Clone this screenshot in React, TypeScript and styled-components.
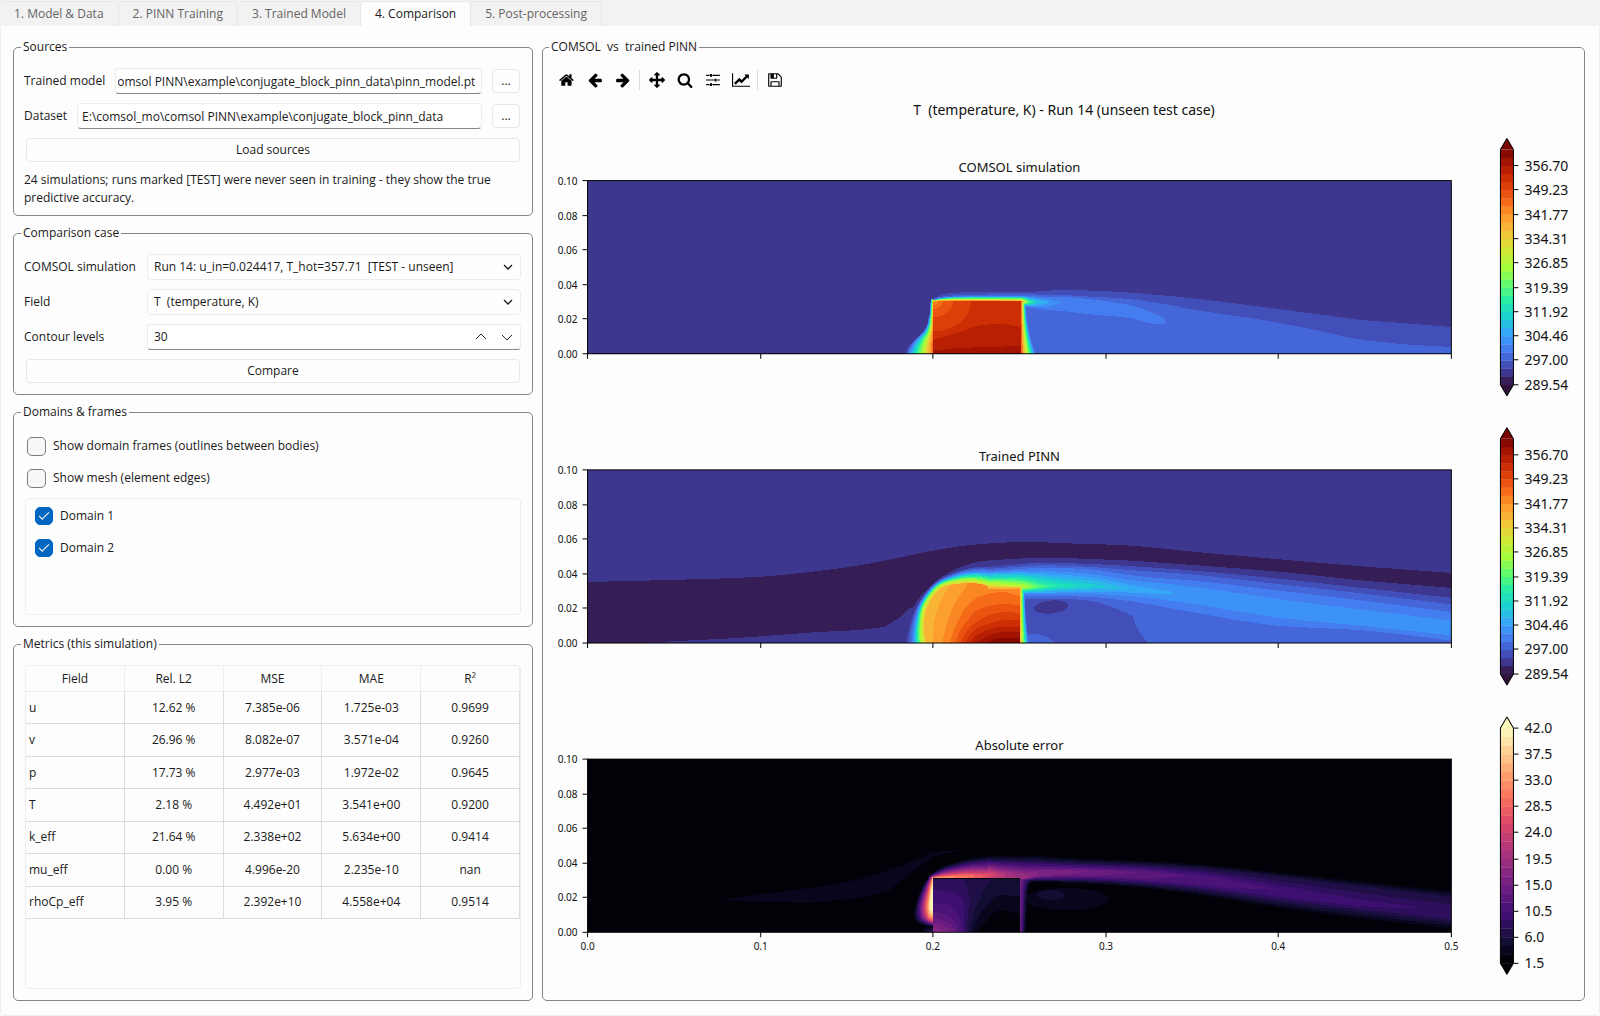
import React, { useEffect, useMemo, useRef, useState } from "react";
import styled, { createGlobalStyle } from "styled-components";

const GlobalStyle = createGlobalStyle`
  *, *::before, *::after { box-sizing: border-box; }
  body { margin: 0; background: #fdfdfd; }
  body, button, input, select, table {
    font-family: "Open Sans", "Noto Sans", "Segoe UI", sans-serif;
    font-size: 12px;
    line-height: 18px;
    color: #1a1a1a;
  }
`;

/* ---------- shell ---------- */

const Page = styled.div`
  min-height: 100vh;
  display: flex;
  flex-direction: column;
`;

const TabBar = styled.div`
  display: flex;
  height: 26px;
  padding-top: 1px;
  background: #f2f2f2;
`;

const Tab = styled.button<{ $active?: boolean }>`
  padding: 0 14px 1px;
  border: 1px solid #e7e7e7;
  border-width: 1px 1px 0 0;
  border-radius: 4px 4px 0 0;
  background: ${(p) => (p.$active ? "#fdfdfd" : "#f2f2f2")};
  color: ${(p) => (p.$active ? "#1a1a1a" : "#646464")};
  white-space: nowrap;
`;

const Content = styled.main`
  flex: 1;
  display: grid;
  grid-template-columns: 520px minmax(0, 1fr);
  gap: 9px;
  padding: 13px 14px 14px 12px;
  border: 1px solid #efefef;
  border-top: 0;
  border-radius: 0 0 4px 4px;
`;

const Side = styled.div`
  display: flex;
  flex-direction: column;
  gap: 9px;
`;

const Group = styled.fieldset<{ $grow?: boolean; $bottom?: number }>`
  display: flex;
  flex-direction: column;
  flex: ${(p) => (p.$grow ? "1" : "none")};
  min-width: 0;
  margin: 0;
  padding: 13px 11px ${(p) => p.$bottom ?? 11}px 10px;
  border: 1px solid #858585;
  border-radius: 5px;
`;

const Legend = styled.legend`
  margin-left: -3px;
  padding: 0 2px;
  line-height: 16px;
  white-space: pre;
`;

const Stack = styled.div<{ $gap: number }>`
  display: flex;
  flex-direction: column;
  flex: 1;
  gap: ${(p) => p.$gap}px;
`;

const Row = styled.div`
  display: flex;
  align-items: center;
  gap: 10px;
`;

const FormGrid = styled.div`
  display: grid;
  grid-template-columns: 114px 1fr;
  gap: 9px;
  align-items: center;
`;

/* ---------- controls ---------- */

const PathInput = styled.input<{ $scrolled?: boolean }>`
  flex: 1;
  min-width: 0;
  height: 26px;
  padding: 0 6px 0 ${(p) => (p.$scrolled ? 2 : 4)}px;
  border: 1px solid #ececec;
  border-bottom-color: #868686;
  border-radius: 4px;
  background: #fff;
`;

const Button = styled.button<{ $small?: boolean }>`
  height: 24px;
  width: ${(p) => (p.$small ? "28px" : "auto")};
  margin: 0 1px 0 ${(p) => (p.$small ? 0 : 2)}px;
  padding: 0;
  border: 1px solid #e8e8e8;
  border-radius: 4px;
  background: #fefefe;
`;

const Note = styled.p`
  margin: 0;
`;

const Field = styled.div`
  position: relative;
  display: flex;
`;

const Select = styled.select`
  flex: 1;
  min-width: 0;
  height: 26px;
  padding: 0 30px 0 6px;
  border: 1px solid #ececec;
  border-radius: 4px;
  background: #fefefe;
  appearance: none;
  white-space: pre;
`;

const SelectArrow = styled.span`
  position: absolute;
  right: 8px;
  top: 0;
  bottom: 0;
  display: flex;
  align-items: center;
  pointer-events: none;
`;

const Spin = styled.div`
  display: flex;
  align-items: center;
  height: 26px;
  border: 1px solid #ececec;
  border-bottom-color: #868686;
  border-radius: 4px;
  background: #fff;
`;

const SpinInput = styled.input`
  flex: 1;
  min-width: 0;
  padding: 0 6px;
  border: 0;
  background: none;
  appearance: textfield;
  &::-webkit-inner-spin-button { appearance: none; margin: 0; }
`;

const SpinButton = styled.button`
  display: grid;
  place-items: center;
  width: 26px;
  height: 24px;
  padding: 0;
  border: 0;
  background: none;
`;

const CheckRow = styled.label`
  display: flex;
  align-items: center;
  gap: 7px;
  height: 26px;
`;

const Check = styled.input`
  appearance: none;
  display: grid;
  place-items: center;
  width: 19px;
  height: 19px;
  margin: 0;
  border: 1px solid #7c7c7c;
  border-radius: 5px;
  background: #f7f7f7;
  &:checked {
    width: 18px;
    height: 18px;
    border-color: #0067c0;
    background: #0067c0;
  }
  &:checked::after {
    content: "";
    width: 10px;
    height: 5px;
    margin-bottom: 4px;
    border: solid #fff;
    border-width: 0 0 1px 1px;
    transform: rotate(-45deg);
  }
`;

const FrameChecks = styled.div`
  display: flex;
  flex-direction: column;
  gap: 6px;
  padding-left: 3px;
`;

const DomainList = styled.div`
  display: flex;
  flex-direction: column;
  gap: 6px;
  height: 117px;
  padding: 4px 9px;
  margin-left: 1px;
  border: 1px solid #eeeeee;
  border-radius: 4px;
`;

/* ---------- metrics ---------- */

const TableFrame = styled.div`
  flex: 1;
  margin-left: 1px;
  border: 1px solid #eeeeee;
  border-radius: 4px;
`;

const Table = styled.table`
  width: 100%;
  height: 253px;
  table-layout: fixed;
  border-collapse: separate;
  border-spacing: 0;
  th { height: 26px; padding: 0; font-weight: 400; border-right: 1px solid #eeeeee; border-bottom: 1px solid #eeeeee; }
  td { padding: 0 3px; text-align: center; border-right: 1px solid #dcdcdc; border-bottom: 1px solid #dcdcdc; }
  td:first-child { text-align: left; }
`;

/* ---------- figure ---------- */

const FigureGroup = styled(Group)`
  padding: 8px 0 4px;
`;

const FigureLegend = styled(Legend)`
  margin-left: 6px;
`;

const Toolbar = styled.div`
  display: flex;
  align-items: center;
  height: 34px;
  padding-left: 10px;
`;

const Tool = styled.button`
  display: grid;
  place-items: center;
  width: 28px;
  height: 28px;
  padding: 0;
  border: 0;
  background: none;
`;

const Separator = styled.span`
  width: 1px;
  height: 20px;
  margin: 0 3px 0 2px;
  background: #dadada;
`;

const Figure = styled.svg`
  display: block;
  width: 100%;
  height: auto;
  text { fill: #111; white-space: pre; font-family: "Noto Sans", "Open Sans", sans-serif; }
  .tick { font-size: 10px; }
  .title { font-size: 13px; }
  .heading { font-size: 14px; }
  .bar { font-size: 14px; }
`;

/* ---------- colour maps ---------- */

type Stop = [number, string];

const even = (list: string): Stop[] => {
  const c = list.split(" ");
  return c.map((v, i) => [i / (c.length - 1), v] as Stop);
};

const TURBO: Stop[] = [
  [0, "30123b"], [0.017, "351e55"], [0.052, "3e378f"],
  ...even("30123b 4145ab 4675ed 39a2fc 1bcfd4 24eca6 61fc6c a4fc3b d1e834 f3c63a fe9b2d f36315 d93806 b11901 7a0402").slice(1),
];
const MAGMA: Stop[] = [
  [0, "000004"], [0.02, "010107"], [0.056, "07061c"],
  ...even("000004 140e36 3b0f70 641a80 8c2981 b73779 de4968 f7705c fe9f6d fecf92 fcfdbf").slice(1),
];

const sample = (stops: Stop[], t: number) => {
  let i = 0;
  while (i < stops.length - 2 && t > stops[i + 1][0]) i++;
  const [t0, a] = stops[i];
  const [t1, b] = stops[i + 1];
  const f = Math.max(0, Math.min(1, (t - t0) / (t1 - t0)));
  const ch = [0, 2, 4].map((o) => {
    const p = parseInt(a.slice(o, o + 2), 16);
    const q = parseInt(b.slice(o, o + 2), 16);
    return Math.round(p + (q - p) * f);
  });
  return `rgb(${ch.join(",")})`;
};

/* ---------- fields, in band numbers over an 863 x 173 plot ---------- */

const W = 863;
const H = 173;

const clamp = (v: number, a: number, b: number) => Math.max(a, Math.min(b, v));

/** Piecewise linear curve through [x, y] pairs. */
const lin = (pts: number[][], x: number) => {
  if (x <= pts[0][0]) return pts[0][1];
  for (let i = 1; i < pts.length; i++) {
    if (x <= pts[i][0]) {
      const [a, b] = [pts[i - 1], pts[i]];
      return b[0] === a[0] ? b[1] : a[1] + ((b[1] - a[1]) * (x - a[0])) / (b[0] - a[0]);
    }
  }
  return pts[pts.length - 1][1];
};

/** Smooth interpolation of whole rows keyed by their first entry. */
const blend = (rows: number[][], x: number): number[] => {
  const n = rows.length;
  if (x <= rows[0][0]) return rows[0].slice(1);
  if (x >= rows[n - 1][0]) return rows[n - 1].slice(1);
  let i = 0;
  while (x > rows[i + 1][0]) i++;
  const p0 = rows[Math.max(0, i - 1)];
  const p1 = rows[i];
  const p2 = rows[i + 1];
  const p3 = rows[Math.min(n - 1, i + 2)];
  const h = p2[0] - p1[0];
  const t = (x - p1[0]) / h;
  return p1.slice(1).map((_, j) => {
    const k = j + 1;
    const s = (p2[k] - p1[k]) / h;
    const sa = i > 0 ? (p1[k] - p0[k]) / (p1[0] - p0[0]) : s;
    const sb = i + 2 < n ? (p3[k] - p2[k]) / (p3[0] - p2[0]) : s;
    const m1 = sa * s > 0 ? (2 * sa * s) / (sa + s) : 0;
    const m2 = sb * s > 0 ? (2 * sb * s) / (sb + s) : 0;
    const t2 = t * t;
    const t3 = t2 * t;
    return (2 * t3 - 3 * t2 + 1) * p1[k] + (t3 - 2 * t2 + t) * h * m1 + (3 * t2 - 2 * t3) * p2[k] + (t3 - t2) * h * m2;
  });
};

type FieldFn = (x: number) => (y: number) => number;

// x, edge of band 2, band 3, band 4, jet axis, jet value, lower edge
const SIM_WAKE = [
  [345, 118, 118.4, 119, 120, 22, 124],
  [352, 114, 116, 117, 120, 22, 124],
  [365, 112, 114.5, 115.5, 120, 22, 124],
  [399, 110.5, 113.5, 115, 120, 22, 124],
  [433, 111, 113, 115, 120.5, 22, 124],
  [440, 111, 113, 115, 121, 13, 126],
  [450, 110.5, 113.5, 115.5, 121, 8, 128],
  [474, 109, 114, 116, 121.5, 5, 130],
  [500, 109.5, 115.5, 118, 125, 4.7, 133],
  [541, 111.5, 118, 124, 130, 4.4, 137],
  [570, 114, 122, 134, 139, 4.15, 143],
  [582, 115, 124, 140, 141, 3.9, 143],
  [602, 117, 128, 142, 143, 3.6, 145],
  [675, 126, 139, 150, 152, 3.5, 155],
  [732, 133.5, 150, 160, 162, 3.5, 165],
  [770, 138.5, 158, 166, 167, 3.5, 169],
  [820, 142.5, 163.5, 170, 171, 3.5, 172],
  [864, 146, 166, 171, 172, 3.5, 173],
];

const simulation: FieldFn = (x) => {
  const [yo, y3, y4, yp, kp, yb] = blend(SIM_WAKE, x);
  const k4 = Math.min(4, kp);
  return (y) => {
    if (x < 345) {
      const xl = lin([[116, 344], [120, 342.5], [133, 341.5], [144, 339], [151, 335], [159, 326], [165, 321], [173, 317]], y);
      if (y < 118) return 1.5;
      return x < xl ? 1.5 : 2 + (21 * (x - xl)) / (345.5 - xl);
    }
    if (x <= 433 && y >= 120) {
      const edge = Math.min(x - 344, 434 - x, y - 119);
      if (edge < 1.5) return 21.5;
      const d = Math.hypot(x - 345, (y - 120) * 1.25);
      const y27 = lin([[346, 169.5], [369, 167], [399, 166], [433, 165]], x);
      const y26 = blend([[346, 158.5], [369, 152], [392, 144.5], [411, 143], [433, 146]], x)[0];
      if (y > y27) return 27.3;
      if (y > y26) return 26.5;
      return lin([[0, 20.5], [5, 22], [10, 23], [20, 24], [38, 25], [40, 25.5]], d);
    }
    let k = lin([[0, 1.2], [yo, 2], [y3, 3], [y4, k4], [yp, kp], [yb, k4], [yb + 3, 3.5], [240, 3.4]], y);
    if (x > 433 && y >= 120) {
      const w = 5 + 10 * Math.pow(clamp((y - 122) / 51, 0, 1), 2);
      k = Math.max(k, 3.5 + 20 * (1 - (x - 433) / w));
    }
    return k;
  };
};

// angle, then radii of bands 1, 2, 3.5, 5, 10, 15, 18 around (400, 173)
const PINN_CAP = [
  [0, 87, 81, 77.5, 74.5, 70.5, 66.5, 62],
  [15, 84.5, 80, 77.5, 75.5, 72.5, 69.5, 66],
  [31, 82.5, 80, 79, 78, 76, 74, 71],
  [47, 81, 80, 79.3, 78.6, 76.9, 75, 72.5],
  [65, 80.5, 78, 76.5, 75, 72, 69, 65.5],
  [90, 82.5, 76, 73.5, 70.5, 65.5, 60, 57],
];

// x, dark band top and bottom, edges of bands 2..5, axis, value, lower edges of 5 and 4, floor row, floor value, base value
const PINN_WAKE = [
  [400, 73.5, 90.5, 97, 99, 101, 102.5, 116, 18, 124, 126, 130, 2.5, 2.5],
  [433, 72, 88.5, 94, 96.5, 99, 101, 117, 16, 124, 126, 131, 2.5, 3.2],
  [450, 72, 88, 93, 95.5, 98, 101, 117, 12.5, 123.5, 126, 131, 2.4, 3.3],
  [468, 73, 88, 93, 95.5, 98, 101.5, 116, 10.3, 124, 126, 130, 2.4, 3],
  [503, 74, 89, 94, 97, 99.5, 104, 116, 8.6, 124, 127, 133, 2.5, 2.6],
  [541, 75.5, 90.5, 96, 100, 105, 110, 119, 7, 126, 131, 145, 2.95, 2.8],
  [570, 78, 92.5, 98, 102, 108, 113, 122, 6.4, 129, 136, 150, 3.4, 3.1],
  [598, 81, 94.5, 100, 104, 110, 116, 124, 5.9, 133, 141, 150, 3.5, 3.3],
  [694, 89.5, 102, 109, 114.5, 121, 129.5, 139, 5.8, 148, 156, 165, 3.5, 3.2],
  [770, 96, 110, 117.5, 123, 130, 139, 148, 5.8, 155.5, 160, 170, 3.4, 3.3],
  [864, 103, 118, 128, 134.5, 142, 150.5, 158, 5.8, 165.5, 170.5, 172.5, 3.6, 3.6],
];

const PINN_BLOCK = [
  [335, 18.6, 19, 19.2, 19.3],
  [346, 19.2, 19.6, 20, 20.1],
  [362, 20, 20.6, 21.2, 22],
  [375, 20.8, 21.4, 22.6, 24.6],
  [390, 21.4, 22.2, 24.1, 27.3],
  [416, 21.6, 22.6, 25.2, 28.9],
  [433, 21, 22.5, 25.2, 28.9],
];

const pinn: FieldFn = (x) => {
  const p = blend(PINN_WAKE, x);
  const b = blend(PINN_BLOCK, x);
  const yd = blend([[0, 112], [80, 110], [168, 107], [230, 101], [273, 95], [307, 88.5], [346, 80.5], [388, 74.5], [437, 72]], x)[0];
  const yb = lin([[0, 174], [50, 173], [150, 168], [230, 162], [273, 160], [296, 157], [311, 148], [322, 138]], x);
  const inside = (y: number) => lin([[116, b[0]], [131, b[1]], [152, b[2]], [173, b[3]]], y);
  const floorY = Math.min(172.9, Math.max(160, p[10] + 0.1));
  return (y) => {
    if (x < 400) {
      const r = Math.hypot(400 - x, H - y);
      const c = blend(PINN_CAP, (Math.atan2(H - y, 400 - x) * 180) / Math.PI);
      if (r > c[0]) return y < yd ? 1.5 : y > yb ? 1.4 : 0.5;
      if (r < c[6]) return inside(y);
      return lin([[c[6], 18], [c[5], 15], [c[4], 10], [c[3], 5], [c[2], 3.5], [c[1], 2], [c[0], 1]], r);
    }
    if (x <= 432 && y > 117) return y < 119 ? 19 : inside(y);
    if (Math.pow((x - 463) / 17, 2) + Math.pow((y - 137 + (x - 463) / 12) / 6.5, 2) < 1) return 1.5;
    let k = lin(
      [[0, 1.8], [p[0], 1], [(p[0] + p[1]) / 2, 0.5], [p[1], 1], [p[2], 2], [p[3], 3], [p[4], 4], [p[5], 5], [p[6], p[7]], [p[8], 5], [p[9], 4], [p[10], p[11]], [floorY, (p[11] + p[12]) / 2], [173, p[12]]],
      y,
    );
    if (x > 432 && y >= 117) {
      const w = 5 + 4 * Math.pow(clamp((y - 122) / 51, 0, 1), 2);
      k = Math.max(k, 3 + 17 * (1 - (x - 432) / w));
    }
    return k;
  };
};

// angle, outer radius of the glow around (400, 173), peak value at the block wall
const ERROR_CAP = [
  [0, 70, 5],
  [5, 72, 1.5],
  [8, 76, 7],
  [12, 77, 17],
  [17, 78, 23],
  [24, 79, 26.8],
  [36, 80.5, 26.5],
  [44, 81.5, 23],
  [52, 81, 20.5],
  [65, 78, 19.5],
  [80, 77, 17.5],
  [90, 77.5, 16.5],
];

// x, edge, edge of band 3, ridge, ridge value, shoulder, shoulder value, lower edge
const ERROR_PLUME = [
  [400, 95.5, 100, 115, 16.5, 119.5, 15.5, 122],
  [415, 95, 101, 115, 13.5, 119.5, 13, 122],
  [433, 95, 101, 114, 11, 119.5, 12, 123],
  [450, 95, 101.5, 113, 10, 117, 10, 123],
  [478, 97, 103, 112, 9.5, 116, 9, 124],
  [541, 100, 105, 113, 8.2, 119, 7.2, 128],
  [600, 103, 108, 117, 7, 124, 6.4, 135],
  [694, 112, 118, 131, 6, 137, 5.5, 150],
  [770, 120, 127, 142, 5.3, 147, 5, 160],
  [864, 130, 138, 152, 4.9, 158, 4.7, 171],
];

const ERROR_BLOCK = [
  [345, 4.5, 5.5, 7.5, 11],
  [360, 4.2, 5.5, 7, 9.5],
  [374, 4, 5, 5.5, 6],
  [382, 3.6, 4, 3.5, 2.8],
  [395, 3.3, 2.8, 1.5, 0.6],
  [412, 2.9, 1.8, 0.6, 0.3],
  [432, 2.7, 1.9, 0.9, 0.4],
];

const error: FieldFn = (x) => {
  const p = blend(ERROR_PLUME, x);
  const b = blend(ERROR_BLOCK, x);
  return (y) => {
    if (x >= 345 && x <= 432 && y >= 119.5) {
      if (y < 120.5) return 0.5;
      return lin([[120, b[0]], [140, b[1]], [157, b[2]], [173, b[3]]], y);
    }
    if (x < 400) {
      const angle = Math.atan2(H - y, 400 - x);
      const r = Math.hypot(400 - x, H - y);
      const [outer, peak] = blend(ERROR_CAP, (angle * 180) / Math.PI);
      const wall = Math.min(55 / Math.cos(angle), 53.5 / Math.sin(angle));
      if (r < outer) return peak * Math.min(1, Math.pow((outer - r) / Math.max(3, (outer - wall) * 0.85), 1.2));
      const up = lin([[130, 141], [230, 128], [273, 120], [310, 108], [345, 93], [372, 91]], x);
      const low = lin([[130, 141], [220, 144], [273, 139], [300, 132], [325, 112], [345, 98], [372, 91]], x);
      return y > up && y < low ? 1.3 : 0;
    }
    let k = lin([[p[0], 0], [p[1], 3], [p[2], p[3]], [p[4], p[5]], [p[6], 0.6], [p[6] + 3, 0]], y);
    if (x > 432 && y >= 119.5) {
      const w = lin([[120, 16], [126, 10], [140, 8], [173, 6]], y);
      k = Math.max(k, lin([[120, 10], [130, 9.5], [173, 9]], y) * (1 - (x - 432) / w));
      if (Math.pow((x - 478) / 42, 2) + Math.pow((y - 140) / 11, 2) < 1) k = Math.max(k, 1.2);
      if (Math.pow((x - 463) / 14, 2) + Math.pow((y - 136) / 5, 2) < 1) k = Math.max(k, 2.2);
    }
    return k;
  };
};

/** Turns a field into one path per colour band, made of horizontal runs. */
const bandPaths = (field: FieldFn, bands: number) => {
  const columns = Array.from({ length: W }, (_, x) => field(x + 0.5));
  const d: string[] = Array(bands).fill("");
  for (let y = 0; y < H; y++) {
    let start = 0;
    let current = -1;
    for (let x = 0; x <= W; x++) {
      const k = x < W ? clamp(Math.floor(columns[x](y + 0.5)), 0, bands - 1) : -2;
      if (k !== current) {
        if (current >= 0) d[current] += `M${start} ${y}h${x - start}v1h${start - x}z`;
        start = x;
        current = k;
      }
    }
  }
  return d;
};

interface PlotProps {
  title: string;
  top: number;
  field: FieldFn;
  bands: number;
  map: Stop[];
  labels: string[];
  firstTick: number;
  tickStep: number;
  over: string;
  under: string;
  xLabels?: boolean;
}

const Plot = ({ title, top, field, bands, map, labels, firstTick, tickStep, over, under, xLabels }: PlotProps) => {
  const paths = useMemo(() => bandPaths(field, bands), [field, bands]);
  const bandHeight = 235 / bands;
  return (
    <g transform={`translate(44 ${top})`}>
      <text className="title" x={W / 2} y={-9} textAnchor="middle">{title}</text>
      <g shapeRendering="crispEdges">
        {paths.map((d, i) => d && <path key={i} d={d} fill={sample(map, (i + 0.5) / bands)} />)}
      </g>
      <rect width={W} height={H} fill="none" stroke="#000" />
      {[0, 1, 2, 3, 4, 5].map((i) => {
        const y = Math.round((H * (5 - i)) / 5);
        return (
          <g key={i}>
            <path d={`M-5 ${y}h5`} stroke="#000" />
            <text className="tick" x={-10} y={y + 4} textAnchor="end">{(i * 0.02).toFixed(2)}</text>
          </g>
        );
      })}
      {[0, 1, 2, 3, 4, 5].map((i) => {
        const x = Math.round((W * i) / 5);
        return (
          <g key={i}>
            <path d={`M${x} ${H}v5`} stroke="#000" />
            {xLabels && <text className="tick" x={x} y={H + 18} textAnchor="middle">{(i / 10).toFixed(1)}</text>}
          </g>
        );
      })}
      <g transform="translate(912 -31)">
        <path d="M0 0L6.500 -11L13 0z" fill={over} />
        <path d="M0 235L6.500 246L13 235z" fill={under} />
        {Array.from({ length: bands }, (_, i) => (
          <rect key={i} y={235 - (i + 1) * bandHeight} width={13} height={bandHeight + 0.3} fill={sample(map, (i + 0.5) / bands)} />
        ))}
        <path d="M0 0L6.500 -11L13 0V235L6.500 246L0 235z" fill="none" stroke="#000" strokeLinejoin="round" />
        {labels.map((label, i) => {
          const y = Math.round(firstTick + i * tickStep);
          return (
            <g key={label}>
              <path d={`M13 ${y}h5`} stroke="#000" />
              <text className="bar" x={24} y={y + 5}>{label}</text>
            </g>
          );
        })}
      </g>
    </g>
  );
};

const T_LABELS = ["356.70", "349.23", "341.77", "334.31", "326.85", "319.39", "311.92", "304.46", "297.00", "289.54"];
const E_LABELS = ["42.0", "37.5", "33.0", "28.5", "24.0", "19.5", "15.0", "10.5", "6.0", "1.5"];

/* ---------- icons ---------- */

const ICONS = {
  home: "M1408 992v480q0 26-19 45t-45 19h-384v-384h-256v384h-384q-26 0-45-19t-19-45v-480q0-1 .5-3t.5-3l575-474 575 474q1 2 1 6zm223-69l-62 74q-8 9-21 11h-3q-13 0-21-7l-692-577-692 577q-12 8-24 7-13-2-21-11l-62-74q-8-10-7-23.5t11-21.5l719-599q32-26 76-26t76 26l244 204v-195q0-14 9-23t23-9h192q14 0 23 9t9 23v408l219 182q10 8 11 21.5t-7 23.5z",
  back: "M1664 896v128q0 53-32.5 90.5t-84.5 37.5h-704l293 294q38 36 38 90t-38 90l-75 76q-37 37-90 37-52 0-91-37l-651-652q-37-37-37-90 0-52 37-91l651-650q38-38 91-38 52 0 90 38l75 74q38 38 38 91t-38 91l-293 293h704q52 0 84.5 37.5t32.5 90.5z",
  forward: "M1600 960q0 54-37 91l-651 651q-39 37-91 37-51 0-90-37l-75-75q-38-38-38-91t38-91l293-293h-704q-52 0-84.5-37.5t-32.5-90.5v-128q0-53 32.5-90.5t84.5-37.5h704l-293-294q-38-36-38-90t38-90l75-75q38-38 90-38 53 0 91 38l651 651q37 35 37 90z",
  move: "M1792 896q0 26-19 45l-256 256q-19 19-45 19t-45-19-19-45v-128h-384v384h128q26 0 45 19t19 45-19 45l-256 256q-19 19-45 19t-45-19l-256-256q-19-19-19-45t19-45 45-19h128v-384h-384v128q0 26-19 45t-45 19-45-19l-256-256q-19-19-19-45t19-45l256-256q19-19 45-19t45 19 19 45v128h384v-384h-128q-26 0-45-19t-19-45 19-45l256-256q19-19 45-19t45 19l256 256q19 19 19 45t-19 45-45 19h-128v384h384v-128q0-26 19-45t45-19 45 19l256 256q19 19 19 45z",
  zoom: "M1216 832q0-185-131.5-316.5t-316.5-131.5-316.5 131.5-131.5 316.5 131.5 316.5 316.5 131.5 316.5-131.5 131.5-316.5zm512 832q0 52-38 90t-90 38q-54 0-90-38l-343-342q-179 124-399 124-143 0-273.5-55.5t-225-150-150-225-55.5-273.5 55.5-273.5 150-225 225-150 273.5-55.5 273.5 55.5 225 150 150 225 55.5 273.5q0 220-124 399l343 343q37 37 37 90z",
  sliders: "M128 320h384v128H128zM832 320h832v128H832zM560 230h224v308H560zM128 832h896v128H128zM1344 832h320v128h-320zM1072 742h224v308h-224zM128 1344h384v128H128zM832 1344h832v128H832zM560 1254h224v308H560z",
  chart: "M2048 1536v128h-2048v-1536h128v1408h1920zm-128-1248v435q0 21-19.500 29.500t-35.500-7.500l-121-121-633 633q-10 10-23 10t-23-10l-233-233-416 416-192-192 585-585q10-10 23-10t23 10l233 233 464-464-121-121q-16-16-7.500-35.500t29.500-19.500h435q14 0 23 9t9 23z",
  save: "M512 1536h768v-384h-768v384zm896 0h128v-896q0-14-10-38.5t-20-34.5l-281-281q-10-10-34-20t-39-10v416q0 40-28 68t-68 28h-576q-40 0-68-28t-28-68v-416h-128v1280h128v-416q0-40 28-68t68-28h832q40 0 68 28t28 68v416zm-384-928v-320q0-13-9.500-22.500t-22.500-9.500h-192q-13 0-22.500 9.500t-9.500 22.500v320q0 13 9.500 22.500t22.500 9.500h192q13 0 22.500-9.500t9.500-22.500zm640 32v928q0 40-28 68t-68 28h-1344q-40 0-68-28t-28-68v-1344q0-40 28-68t68-28h928q40 0 88 20t76 48l280 280q28 28 48 76t20 88z",
};

const ToolButton = ({ name, label }: { name: keyof typeof ICONS; label: string }) => {
  const w = name === "chart" ? 2048 : 1792;
  return (
    <Tool type="button" aria-label={label}>
      <svg width={name === "chart" ? 18 : 16} height={16} viewBox={`0 0 ${w} 1792`} aria-hidden="true">
        <path d={ICONS[name]} />
      </svg>
    </Tool>
  );
};

const Chevron = ({ up }: { up?: boolean }) => (
  <svg width="12" height="10" viewBox="0 0 12 10" fill="none" stroke="#222" aria-hidden="true">
    <path d={up ? "M1 7L6 2L11 7" : "M1 3L6 8L11 3"} />
  </svg>
);

const SelectChevron = () => (
  <SelectArrow>
    <svg width="10" height="8" viewBox="0 0 10 8" fill="none" stroke="#1a1a1a" strokeWidth="1.300" aria-hidden="true">
      <path d="M1 2L5 6L9 2" />
    </svg>
  </SelectArrow>
);

/* ---------- data ---------- */

const TABS = ["1. Model & Data", "2. PINN Training", "3. Trained Model", "4. Comparison", "5. Post-processing"];

const METRICS = [
  ["u", "12.62 %", "7.385e-06", "1.725e-03", "0.9699"],
  ["v", "26.96 %", "8.082e-07", "3.571e-04", "0.9260"],
  ["p", "17.73 %", "2.977e-03", "1.972e-02", "0.9645"],
  ["T", "2.18 %", "4.492e+01", "3.541e+00", "0.9200"],
  ["k_eff", "21.64 %", "2.338e+02", "5.634e+00", "0.9414"],
  ["mu_eff", "0.00 %", "4.996e-20", "2.235e-10", "nan"],
  ["rhoCp_eff", "3.95 %", "2.392e+10", "4.558e+04", "0.9514"],
];

export default function App() {
  const modelRef = useRef<HTMLInputElement>(null);
  const [levels, setLevels] = useState(30);

  useEffect(() => {
    const el = modelRef.current;
    if (el) el.scrollLeft = el.scrollWidth;
  }, []);

  return (
    <Page>
      <GlobalStyle />
      <TabBar role="tablist">
        {TABS.map((t, i) => (
          <Tab key={t} type="button" role="tab" aria-selected={i === 3} $active={i === 3}>{t}</Tab>
        ))}
      </TabBar>
      <Content>
        <Side>
          <Group $bottom={8}>
            <Legend>Sources</Legend>
            <Stack $gap={9}>
              <Row>
                <label htmlFor="model">Trained model</label>
                <PathInput id="model" ref={modelRef} $scrolled defaultValue={"E:\\comsol_mo\\comsol PINN\\example\\conjugate_block_pinn_data\\pinn_model.pt"} />
                <Button $small type="button" aria-label="Browse for model">...</Button>
              </Row>
              <Row>
                <label htmlFor="dataset">Dataset</label>
                <PathInput id="dataset" defaultValue={"E:\\comsol_mo\\comsol PINN\\example\\conjugate_block_pinn_data"} />
                <Button $small type="button" aria-label="Browse for dataset">...</Button>
              </Row>
              <Button type="button">Load sources</Button>
              <Note>24 simulations; runs marked [TEST] were never seen in training - they show the true predictive accuracy.</Note>
            </Stack>
          </Group>

          <Group>
            <Legend>Comparison case</Legend>
            <Stack $gap={9}>
              <FormGrid>
                <label htmlFor="run">COMSOL simulation</label>
                <Field>
                  <Select id="run"><option>{"Run 14: u_in=0.024417, T_hot=357.71\u00a0 [TEST - unseen]"}</option></Select>
                  <SelectChevron />
                </Field>
                <label htmlFor="field">Field</label>
                <Field>
                  <Select id="field"><option>{"T\u00a0 (temperature, K)"}</option></Select>
                  <SelectChevron />
                </Field>
                <label htmlFor="levels">Contour levels</label>
                <Spin>
                  <SpinInput id="levels" type="number" value={levels} onChange={(e) => setLevels(Number(e.target.value))} />
                  <SpinButton type="button" aria-label="More levels" onClick={() => setLevels(levels + 1)}><Chevron up /></SpinButton>
                  <SpinButton type="button" aria-label="Fewer levels" onClick={() => setLevels(levels - 1)}><Chevron /></SpinButton>
                </Spin>
              </FormGrid>
              <Button type="button">Compare</Button>
            </Stack>
          </Group>

          <Group>
            <Legend>Domains &amp; frames</Legend>
            <Stack $gap={7}>
              <FrameChecks>
                <CheckRow><Check type="checkbox" />Show domain frames (outlines between bodies)</CheckRow>
                <CheckRow><Check type="checkbox" />Show mesh (element edges)</CheckRow>
              </FrameChecks>
              <DomainList>
                <CheckRow><Check type="checkbox" defaultChecked />Domain 1</CheckRow>
                <CheckRow><Check type="checkbox" defaultChecked />Domain 2</CheckRow>
              </DomainList>
            </Stack>
          </Group>

          <Group $grow>
            <Legend>Metrics (this simulation)</Legend>
            <Stack $gap={0}>
              <TableFrame>
                <Table>
                  <thead>
                    <tr><th>Field</th><th>Rel. L2</th><th>MSE</th><th>MAE</th><th>R²</th></tr>
                  </thead>
                  <tbody>
                    {METRICS.map((row) => (
                      <tr key={row[0]}>{row.map((v, i) => <td key={i}>{v}</td>)}</tr>
                    ))}
                  </tbody>
                </Table>
              </TableFrame>
            </Stack>
          </Group>
        </Side>

        <FigureGroup>
          <FigureLegend>{"COMSOL  vs  trained PINN"}</FigureLegend>
          <Toolbar>
            <ToolButton name="home" label="Home" />
            <ToolButton name="back" label="Back" />
            <ToolButton name="forward" label="Forward" />
            <Separator />
            <ToolButton name="move" label="Pan" />
            <ToolButton name="zoom" label="Zoom" />
            <ToolButton name="sliders" label="Configure subplots" />
            <ToolButton name="chart" label="Edit axis" />
            <Separator />
            <ToolButton name="save" label="Save" />
          </Toolbar>
          <Figure viewBox="-0.5 -0.5 1040 898" role="img" aria-label="Temperature comparison">
            <text className="heading" x={520} y={17} textAnchor="middle">{"T  (temperature, K) - Run 14 (unseen test case)"}</text>
            <Plot title="COMSOL simulation" top={83} field={simulation} bands={29} map={TURBO} labels={T_LABELS} firstTick={16} tickStep={24.3} over="#7a0402" under="#30123b" />
            <Plot title="Trained PINN" top={372} field={pinn} bands={29} map={TURBO} labels={T_LABELS} firstTick={16} tickStep={24.3} over="#7a0402" under="#30123b" />
            <Plot title="Absolute error" top={661} field={error} bands={27} map={MAGMA} labels={E_LABELS} firstTick={0} tickStep={26.1} over="#fcfdbf" under="#000004" xLabels />
          </Figure>
        </FigureGroup>
      </Content>
    </Page>
  );
}
